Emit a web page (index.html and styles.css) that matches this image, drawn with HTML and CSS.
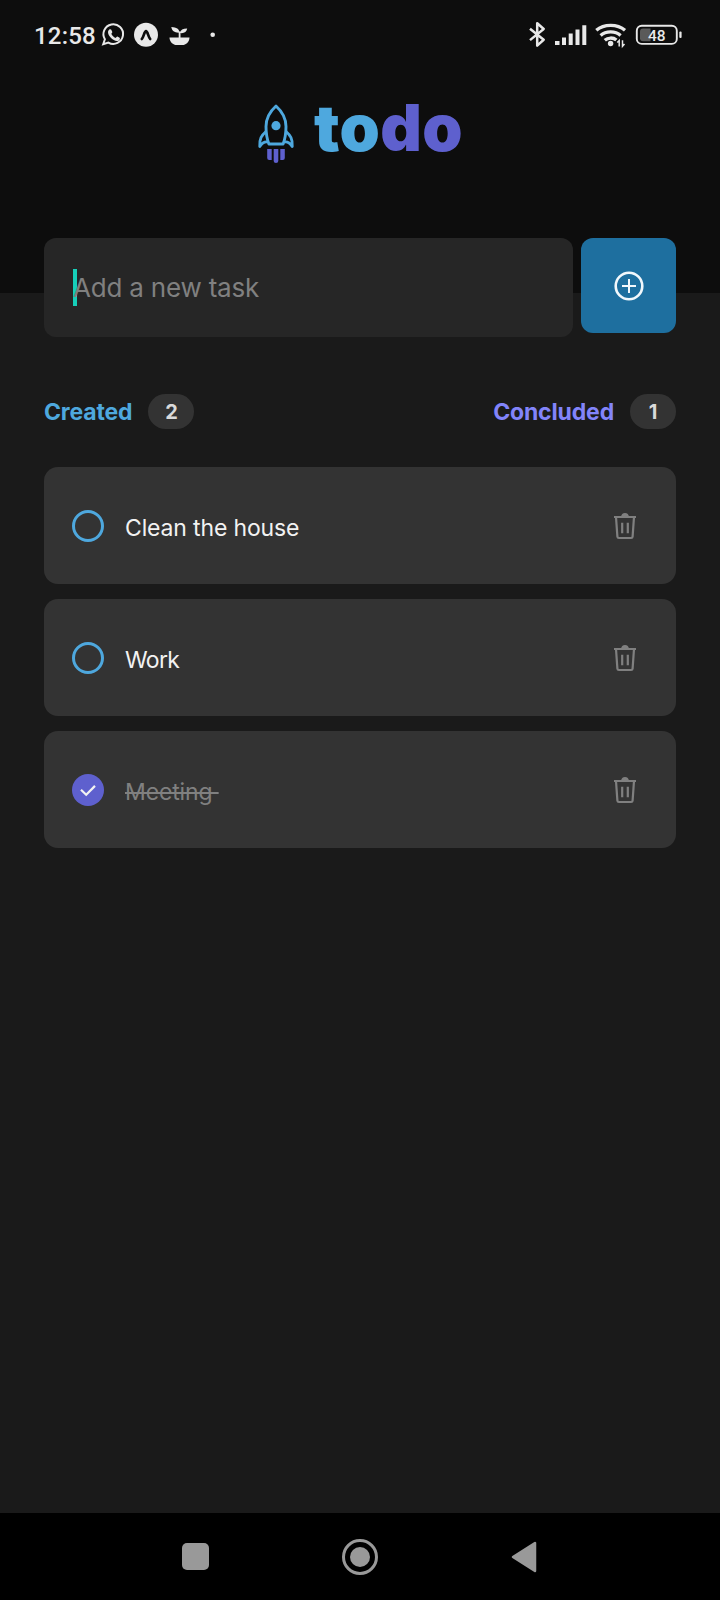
FILE: index.html
```html
<!DOCTYPE html>
<html lang="en">
<head>
<meta charset="utf-8">
<title>todo</title>
<link rel="stylesheet" href="styles.css">
</head>
<body>
<div class="screen">
  <header class="header">
    <div class="status">
      <span class="clock">12:58</span>
      <svg class="status-left" width="124" height="30" viewBox="98 20 124 30">
        <path d="M103.200 44.200l1.700-5a9.800 9.800 0 1 1 3.500 3.400z" fill="none" stroke="#e8e8e8" stroke-width="2"/>
        <path d="M109.300 29.600c.6-.5 1.700-.4 2 .2l1 2.300c.2.600-1 1.400-.9 2 .9 1.900 2.300 3.100 4.100 3.800.6.100 1.200-1.500 1.900-1.300l2.200 1.100c.7.500.1 2.200-.7 2.700-2.600 1.400-5.600-.3-7.600-2.100-2.200-2.100-4.900-6.300-2-8.700z" fill="#e8e8e8"/>
        <circle cx="146" cy="34.800" r="12" fill="#e8e8e8"/>
        <path d="M141.800 39c1.900-1.600 2.400-7.800 4.200-7.800s2.300 6.200 4.200 7.800" fill="none" stroke="#0d0d0d" stroke-width="2.700" stroke-linecap="round"/>
        <path d="M169.500 37.500h20c0 4.300-3.500 7.600-7.300 7.600h-5.400c-3.800 0-7.300-3.300-7.300-7.600z" fill="#e8e8e8"/>
        <path d="M171.300 27c5.300.2 8 2 8.200 5.600-4.500.4-7.600-1.600-8.200-5.600zM187.200 28.600c-4.300 0-6.700 1.400-7.400 4.500 4.200.7 6.800-1 7.400-4.500z" fill="#e8e8e8"/>
        <path d="M179.600 31.500v7" stroke="#e8e8e8" stroke-width="1.800"/>
        <circle cx="212.700" cy="34.800" r="2.300" fill="#e8e8e8"/>
      </svg>
      <svg class="status-right" width="156" height="30" viewBox="526 20 156 30">
        <path d="M530 28.700l13.700 11.100-6.500 5.800V23.200l6.500 5.800-13.700 11.100" fill="none" stroke="#e8e8e8" stroke-width="2.500" stroke-linejoin="round"/>
        <path d="M555 41h4.500v4H555zM562 37.600h4V45h-4zM568.700 33.500h4V45h-4zM575.500 29.400h4V45h-4zM582.300 25.300h4V45h-4z" fill="#e8e8e8"/>
        <g fill="none" stroke="#e8e8e8" stroke-width="3.300">
          <path d="M596.300 30.300c7.700-6.600 21-6.600 28.700 0"/>
          <path d="M600.600 35.400c5.300-4.700 14.700-4.700 20 0"/>
          <path d="M604.800 40.300c3.200-3 8.400-3 11.600-.2"/>
        </g>
        <circle cx="610.600" cy="43.500" r="2.700" fill="#e8e8e8"/>
        <path d="M619.200 46.500v-6l-2 2M622.500 40.300v6l2-2.300" fill="none" stroke="#e8e8e8" stroke-width="1.500"/>
        <rect x="636.800" y="25.700" width="40" height="18.200" rx="5" fill="none" stroke="#e8e8e8" stroke-width="1.900"/>
        <path d="M643 28.500h7.500v12.700H643a3 3 0 0 1-3-3v-6.700a3 3 0 0 1 3-3z" fill="#5a5a5a"/>
        <rect x="679.300" y="31.400" width="2.300" height="6.600" rx="1" fill="#e8e8e8"/>
        <text class="battery" x="656.700" y="40.500">48</text>
      </svg>
    </div>
    <div class="logo">
      <svg width="38" height="62" viewBox="257 102 38 62">
        <g fill="none" stroke="#4ea8de" stroke-width="2.900" stroke-linejoin="round">
          <path d="M276 106C270.500 111 266 119 266 126.500Q266 136.500 268.900 144H283.100Q286 136.500 286 126.500C286 119 281.500 111 276 106Z"/>
          <path d="M266 131.500C261.500 135.500 259.300 138.500 259.800 146.500Q263.300 141 267.800 142M286 131.500C290.500 135.500 292.700 138.500 292.200 146.500Q288.700 141 284.200 142"/>
        </g>
        <circle cx="276" cy="125.700" r="4.600" fill="#4ea8de"/>
        <path d="M267.200 149h4.500v11h-2.500q-2 0-2-2zM280.300 149h4.500v9q0 2-2 2h-2.500zM273.700 149h4.600v12q0 2-2.300 2t-2.300-2z" fill="#5e60ce"/>
      </svg>
      <h1 class="brand"><span class="brand-to">to</span><span class="brand-do">do</span></h1>
    </div>
  </header>

  <main class="content">
    <div class="form">
      <div class="input"><span class="caret"></span><span class="placeholder">Add a new task</span></div>
      <div class="add">
        <svg width="30" height="30" viewBox="0 0 30 30" fill="none" stroke="#f2f8fc">
          <circle cx="15" cy="15" r="13.300" stroke-width="2.600"/>
          <path d="M15 8v14M8 15h14" stroke-width="2"/>
        </svg>
      </div>
    </div>

    <div class="counts">
      <div class="count"><span class="created">Created</span><span class="badge">2</span></div>
      <div class="count"><span class="concluded">Concluded</span><span class="badge">1</span></div>
    </div>

    <ul class="tasks">
      <li class="task">
        <span class="check"></span><span class="title">Clean the house</span>
        <svg class="trash" width="24" height="28" viewBox="0 0 24 28"><path d="M1 5h22M3 5l1.400 19.700q.1 1.300 1.500 1.300h12.200q1.400 0 1.500-1.300L21 5M9.200 10.800v10.400M14.800 10.800v10.400"/><path class="handle" d="M8 5Q8.500 1 12 1T16 5z"/></svg>
      </li>
      <li class="task">
        <span class="check"></span><span class="title short">Work</span>
        <svg class="trash" width="24" height="28" viewBox="0 0 24 28"><path d="M1 5h22M3 5l1.400 19.700q.1 1.300 1.500 1.300h12.200q1.400 0 1.500-1.300L21 5M9.200 10.800v10.400M14.800 10.800v10.400"/><path class="handle" d="M8 5Q8.500 1 12 1T16 5z"/></svg>
      </li>
      <li class="task">
        <span class="check checked"><svg width="32" height="32" viewBox="0 0 32 32"><path d="M9 15.700l5.200 5 8.800-8.800" fill="none" stroke="#f2f2f2" stroke-width="2.200"/></svg></span><span class="title done">Meeting </span>
        <svg class="trash" width="24" height="28" viewBox="0 0 24 28"><path d="M1 5h22M3 5l1.400 19.700q.1 1.300 1.500 1.300h12.200q1.400 0 1.500-1.300L21 5M9.200 10.800v10.400M14.800 10.800v10.400"/><path class="handle" d="M8 5Q8.500 1 12 1T16 5z"/></svg>
      </li>
    </ul>
  </main>

  <nav class="nav">
    <svg width="27" height="27" viewBox="0 0 27 27"><rect width="27" height="27" rx="5" fill="#999"/></svg>
    <svg width="38" height="38" viewBox="0 0 38 38"><circle cx="19" cy="19" r="16.500" fill="none" stroke="#999" stroke-width="3"/><circle cx="19" cy="19" r="10" fill="#999"/></svg>
    <svg width="26" height="32" viewBox="0 0 26 32"><path d="M24 2v28L2 16z" fill="#999" stroke="#999" stroke-width="2.500" stroke-linejoin="round"/></svg>
  </nav>
</div>
</body>
</html>
```
FILE: styles.css
```css
* { box-sizing: border-box; }
body { margin: 0; background: #1a1a1a; font-family: Inter, "Liberation Sans", sans-serif; }
svg { display: block; flex: none; }
.screen { display: flex; flex-direction: column; width: 720px; height: 1600px; background: #1a1a1a; }

.header { height: 293px; flex: none; background: #0d0d0d; }
.status { display: flex; align-items: center; height: 70px; padding: 0 38px 0 34px; }
.clock { width: 64px; margin-top: 2px; font: 500 24px/30px Roboto, sans-serif; color: #e8e8e8; white-space: nowrap; letter-spacing: 0.2px; }
.status-right { margin-left: auto; }
.battery { font: 500 15.5px Roboto, sans-serif; fill: #e8e8e8; text-anchor: middle; }

.logo { display: flex; align-items: center; height: 62px; margin-top: 32px; padding-left: 257px; }
.brand { margin: -10px 0 0 19px; font-size: 64.5px; line-height: 62px; font-weight: 900; letter-spacing: 0.4px; }
.brand-to { color: #4ea8de; }
.brand-do { color: #5e60ce; }

.content { flex: 1; padding: 0 44px; margin-top: -55px; }
.form { display: flex; align-items: flex-start; gap: 8px; }
.input { display: flex; align-items: center; flex: 1; height: 99px; padding-left: 29px; border-radius: 12px; background: #262626; }
.caret { width: 4px; height: 37px; margin-right: -4px; background: #16cfb9; }
.placeholder { font-size: 26px; color: #808080; letter-spacing: -0.2px; }
.add { display: flex; align-items: center; justify-content: center; width: 95px; height: 95px; border-radius: 12px; background: #1e6f9f; }

.counts { display: flex; justify-content: space-between; margin-top: 57px; }
.count { display: flex; align-items: center; gap: 16px; height: 35px; font-size: 23px; font-weight: 700; letter-spacing: -0.15px; }
.created { color: #4ea8de; }
.concluded { color: #8284fa; }
.badge { display: flex; align-items: center; justify-content: center; width: 46px; height: 35px; border-radius: 18px; background: #333; color: #d9d9d9; font-size: 20px; }

.tasks { display: flex; flex-direction: column; gap: 15px; margin: 38px 0 0; padding: 0; list-style: none; }
.task { display: flex; align-items: center; height: 117px; padding: 0 39px 0 28px; border-radius: 14px; background: #333; }
.check { width: 32px; height: 32px; border: 3px solid #4ea8de; border-radius: 50%; }
.checked { border: 0; background: #5e60ce; }
.title { margin: 4px 0 0 21px; font-size: 23px; letter-spacing: -0.15px; color: #f2f2f2; white-space: pre; }
.short { letter-spacing: -0.7px; }
.done { color: #808080; text-decoration: line-through; text-decoration-thickness: 1.5px; }
.trash { margin-left: auto; fill: none; stroke: #808080; stroke-width: 2.2; }
.handle { fill: #808080; stroke: none; }

.nav { display: flex; align-items: center; height: 87px; padding-left: 182px; background: #000; }
.nav svg:nth-child(2) { margin-left: 132px; }
.nav svg:nth-child(3) { margin-left: 132px; }
```
